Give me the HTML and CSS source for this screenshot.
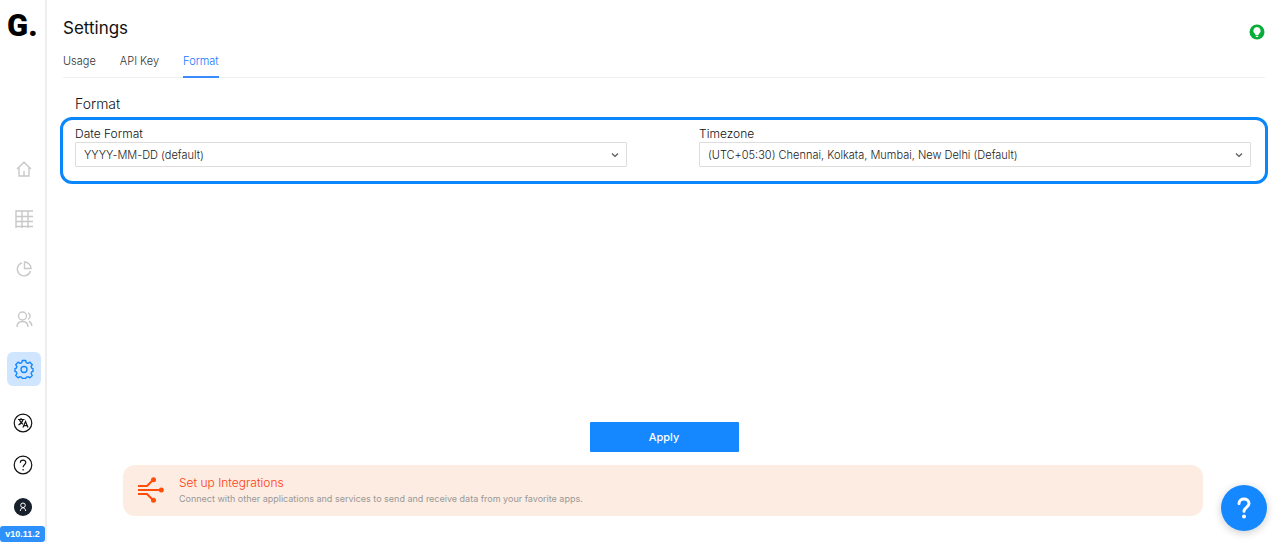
FILE: index.html
```
<!DOCTYPE html>
<html lang="en">

<head>
    <meta charset="UTF-8">
    <meta name="viewport" content="width=device-width, initial-scale=1.0">
    <title>Settings</title>
    <link rel="stylesheet" href="styles.css">
</head>

<body>
    <aside class="sidebar">
        <a class="logo" href="#">G.</a>

        <nav class="side-nav">
            <a class="side-link" href="#" aria-label="Home">
                <svg width="16" height="16" viewBox="0 0 16 16">
                    <path d="M1 8 8 1.200 15 8M3 6.500V15h10V6.500M8 15v-5" />
                </svg>
            </a>
            <a class="side-link" href="#" aria-label="Tables">
                <svg width="18" height="18" viewBox="0 0 18 18">
                    <path d="M1 18V1h17M1 6.500h17M1 11.500h17M1 16.500h17M7 1v17M13 1v17" />
                </svg>
            </a>
            <a class="side-link" href="#" aria-label="Reports">
                <svg width="16" height="16" viewBox="0 0 16 16">
                    <path d="M6 1.800A6.700 6.700 0 1 0 14.500 10M8.500 1v6.500H15A6.500 6.500 0 0 0 8.500 1z" />
                </svg>
            </a>
            <a class="side-link" href="#" aria-label="Users">
                <svg width="18" height="18" viewBox="0 0 18 18">
                    <circle cx="7.500" cy="6" r="4" />
                    <path d="M2 17c0-3.500 2.200-5.500 5.500-5.500s5.500 2 5.500 5.500M13 3c2.800 1 2.800 5 0 6.500M14 11.500c1.800.8 2.800 2.500 2.800 4.500" />
                </svg>
            </a>
            <a class="side-link active" href="#" aria-label="Settings">
                <svg width="20" height="20" viewBox="0 0 20 20">
                    <path d="M8.300 1.500h3.400l.6 2.200 1.600.7 2-1.200 2.400 2.500-1.200 1.900.6 1.600 1.300.4v2.800l-1.300.5-.6 1.600 1.200 2-2.400 2.300-2-1.200-1.600.7-.6 1.200H8.300l-.6-1.200-1.600-.7-2 1.200-2.400-2.300 1.200-2-.6-1.600L1 12.400V9.600l1.300-.4.6-1.600-1.200-1.900 2.400-2.500 2 1.200 1.600-.7z" />
                    <circle cx="10" cy="10.500" r="3" />
                </svg>
            </a>
        </nav>

        <div class="side-tools">
            <button class="tool-button" aria-label="Language">
                <svg width="20" height="20" viewBox="0 0 20 20">
                    <circle cx="10" cy="10" r="8.800" />
                    <path d="M5 6.500h6.500M8 5v1.500M10 6.500c-.6 2.500-2.500 4.500-4.500 5.500M6.500 7c.8 2 2 3.500 3.500 4.300M10 14.500l2.500-6 2.500 6M11 12.700h3" />
                </svg>
            </button>
            <button class="tool-button" aria-label="Help">
                <svg width="20" height="20" viewBox="0 0 20 20">
                    <circle cx="10" cy="10" r="8.800" />
                    <path d="M7.300 7.800c0-3.600 5.500-3.600 5.500-.2 0 2.200-2.700 2.200-2.700 4.600M10.100 14v1.400" />
                </svg>
            </button>
            <button class="tool-button profile" aria-label="Profile">
                <svg width="20" height="20" viewBox="0 0 20 20">
                    <circle class="disc" cx="10" cy="10" r="9" />
                    <circle cx="10" cy="8.300" r="2.300" />
                    <path d="M7.300 14c.2-2 1.200-3.200 2.700-3.200s2.500 1.200 2.700 3.200" />
                </svg>
            </button>
            <span class="version">v10.11.2</span>
        </div>
    </aside>

    <main>
        <header class="page-header">
            <h1>Settings</h1>
            <button class="tip-button" aria-label="Tips">
                <svg width="16" height="16" viewBox="0 0 16 16">
                    <circle cx="8" cy="8" r="7.500" fill="#06ad38" />
                    <path d="M8 3a3.700 3.700 0 0 0-2 6.800l.7 1.500h2.600l.7-1.500A3.700 3.700 0 0 0 8 3zM6.800 12h2.400v1H6.800z" fill="#fff" />
                </svg>
            </button>
        </header>

        <nav class="tabs">
            <a href="#">Usage</a>
            <a href="#">API Key</a>
            <a class="active" href="#">Format</a>
        </nav>

        <form class="format-form">
            <h2>Format</h2>
            <div class="format-fields">
                <div class="field">
                    <label for="dateFormat">Date Format</label>
                    <div class="select-wrap">
                        <select id="dateFormat">
                            <option>YYYY-MM-DD (default)</option>
                        </select>
                        <svg width="8" height="6" viewBox="0 0 8 6">
                            <path d="M1 1.500l3 3 3-3" />
                        </svg>
                    </div>
                </div>
                <div class="field">
                    <label for="timezone">Timezone</label>
                    <div class="select-wrap">
                        <select id="timezone">
                            <option>(UTC+05:30) Chennai, Kolkata, Mumbai, New Delhi (Default)</option>
                        </select>
                        <svg width="8" height="6" viewBox="0 0 8 6">
                            <path d="M1 1.500l3 3 3-3" />
                        </svg>
                    </div>
                </div>
            </div>
            <button class="apply-button" type="submit">Apply</button>
        </form>

        <section class="integrations">
            <svg width="26" height="26" viewBox="0 0 26 26">
                <path d="M0 9h9l6-6M0 13h23M0 17h9l6 6" />
                <circle cx="15.500" cy="2.800" r="2.500" />
                <circle cx="23.300" cy="13" r="2.500" />
                <circle cx="15.500" cy="23.200" r="2.500" />
            </svg>
            <div>
                <h3>Set up Integrations</h3>
                <p>Connect with other applications and services to send and receive data from your favorite apps.</p>
            </div>
        </section>
    </main>

    <!-- Floating help button -->
    <button class="help-button" aria-label="Open help">
        <svg width="14" height="22" viewBox="0 0 14 22">
            <path d="M2 6.500C2 .5 12 .5 12 6.500c0 4-5 3.700-5 7.800" />
            <circle cx="7" cy="19.500" r="2" />
        </svg>
    </button>
</body>

</html>
```
FILE: styles.css
```
* {
    box-sizing: border-box;
}

body {
    font-family: Inter, "Liberation Sans", sans-serif;
    font-weight: 300;
    margin: 0;
    min-height: 100vh;
    display: flex;
    background-color: #fff;
    color: #111;
}

a {
    text-decoration: none;
}

button {
    font-family: inherit;
    border: none;
    padding: 0;
    background: none;
    cursor: pointer;
}

svg {
    display: block;
    fill: none;
}

h1,
h2,
h3,
p {
    margin: 0;
    font-weight: inherit;
}

/* Sidebar */
.sidebar {
    width: 47px;
    flex-shrink: 0;
    display: flex;
    flex-direction: column;
    border-right: 2px solid #eee;
}

.logo {
    height: 50px;
    padding-left: 7px;
    font-family: Roboto, sans-serif;
    font-size: 31px;
    line-height: 52px;
    font-weight: 900;
    color: #000;
}

.side-nav {
    display: flex;
    flex-direction: column;
    align-items: center;
    gap: 16px;
    margin: auto 0;
    padding: 74px 0 0 2px;
}

.side-link {
    width: 34px;
    height: 34px;
    display: flex;
    align-items: center;
    justify-content: center;
    border-radius: 6px;
}

.side-link svg {
    stroke: #c8c8c8;
    stroke-width: 1.4;
}

.side-link.active {
    background-color: #d0e6ff;
}

.side-link.active svg {
    stroke: #1688ff;
    stroke-linejoin: round;
}

.side-tools {
    display: flex;
    flex-direction: column;
    align-items: center;
    gap: 22px;
}

.tool-button svg {
    stroke: #111;
    stroke-width: 1.2;
}

.profile svg {
    stroke: #fff;
    stroke-width: 1;
}

.profile .disc {
    fill: #18212b;
    stroke: none;
}

.version {
    align-self: stretch;
    margin-top: -13px;
    border-radius: 3px;
    background-color: #2e90fa;
    color: #fff;
    font-family: "Liberation Sans", sans-serif;
    font-size: 9px;
    line-height: 16px;
    font-weight: 700;
    text-align: center;
}

/* Page */
main {
    flex: 1;
    min-width: 0;
    display: flex;
    flex-direction: column;
    padding: 16px 15px 26px 16px;
}

.page-header {
    display: flex;
    justify-content: space-between;
}

h1 {
    font-size: 17px;
    line-height: 24px;
    font-weight: 400;
}

.tip-button {
    align-self: flex-end;
}

.tabs {
    display: flex;
    gap: 24px;
    margin-top: 4px;
    border-bottom: 1px solid #f0f0f0;
}

.tabs a {
    margin-bottom: -1px;
    padding: 9px 0 7px;
    border-bottom: 2px solid transparent;
    font-size: 11px;
    line-height: 16px;
    color: #333;
}

.tabs a.active {
    color: #1677ff;
    border-color: #3b8bff;
}

/* Format form */
.format-form {
    flex: 1;
    display: flex;
    flex-direction: column;
}

h2 {
    padding: 16px 12px 3px;
    font-size: 14px;
    line-height: 20px;
}

.format-fields {
    display: grid;
    grid-template-columns: 1fr 1fr;
    gap: 72px;
    margin: 0 -3px;
    padding: 6px 14px 14px 12px;
    border: 3px solid #0a87fb;
    border-radius: 12px;
}

.field label {
    display: block;
    font-size: 12px;
    line-height: 16px;
}

.select-wrap {
    display: grid;
    align-items: center;
}

.select-wrap select,
.select-wrap svg {
    grid-area: 1 / 1;
}

.select-wrap svg {
    justify-self: end;
    margin-right: 8px;
    stroke: #555;
    stroke-width: 1.2;
    pointer-events: none;
}

select {
    appearance: none;
    width: 100%;
    height: 25px;
    padding: 0 24px 0 8px;
    border: 1px solid #ddd;
    border-radius: 1px;
    background-color: #fff;
    font-family: inherit;
    font-size: 11px;
    font-weight: 300;
    color: #222;
}

.apply-button {
    align-self: center;
    width: 149px;
    height: 30px;
    margin-top: auto;
    margin-bottom: 13px;
    border-radius: 1px;
    background-color: #1688ff;
    color: #fff;
    font-size: 11px;
    font-weight: 500;
}

/* Integrations banner */
.integrations {
    display: flex;
    align-items: center;
    gap: 15px;
    margin: 0 62px 0 60px;
    padding: 9px 15px 10px;
    border-radius: 12px;
    background-color: #fcece1;
}

.integrations path {
    stroke: #ff4e0a;
    stroke-width: 2;
}

.integrations circle {
    fill: #ff4e0a;
}

h3 {
    font-size: 12px;
    line-height: 18px;
    color: #ff3c14;
}

.integrations p {
    font-size: 9px;
    line-height: 14px;
    font-weight: 400;
    color: #999;
}

/* Floating help */
.help-button {
    position: fixed;
    right: 13px;
    bottom: 11px;
    width: 46px;
    height: 46px;
    display: flex;
    align-items: center;
    justify-content: center;
    border-radius: 50%;
    background-color: #1688ff;
    box-shadow: 0 2px 8px rgba(0, 0, 0, 0.2);
}

.help-button path {
    stroke: #fff;
    stroke-width: 3;
    stroke-linecap: round;
}

.help-button circle {
    fill: #fff;
}
```
